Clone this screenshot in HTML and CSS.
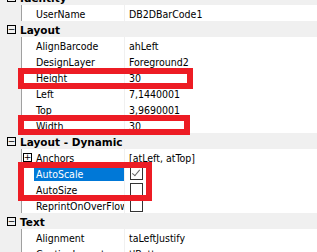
FILE: index.html
```html
<!DOCTYPE html>
<html lang="en">
<head>
    <meta charset="UTF-8">
    <title>Object Inspector</title>
    <link rel="stylesheet" href="styles.css">
</head>
<body>
    <div class="inspector">
        <div class="grid">
            <div class="row category"><span class="toggle">&minus;</span>Identity</div>
            <div class="row"><div class="gutter"></div><div class="name">UserName</div><div class="value">DB2DBarCode1</div></div>

            <div class="row category"><span class="toggle">&minus;</span>Layout</div>
            <div class="row"><div class="gutter"></div><div class="name">AlignBarcode</div><div class="value">ahLeft</div></div>
            <div class="row"><div class="gutter"></div><div class="name">DesignLayer</div><div class="value">Foreground2</div></div>
            <div class="row"><div class="gutter"></div><div class="name">Height</div><div class="value">30</div></div>
            <div class="row"><div class="gutter"></div><div class="name">Left</div><div class="value">7,1440001</div></div>
            <div class="row"><div class="gutter"></div><div class="name">Top</div><div class="value">3,9690001</div></div>
            <div class="row"><div class="gutter"></div><div class="name">Width</div><div class="value">30</div></div>

            <div class="row category"><span class="toggle">&minus;</span>Layout - Dynamic</div>
            <div class="row"><div class="gutter"></div><div class="name sub"><span class="toggle small">+</span>Anchors</div><div class="value">[atLeft, atTop]</div></div>
            <div class="row"><div class="gutter"></div><div class="name selected">AutoScale</div><div class="value"><span class="check checked"></span></div></div>
            <div class="row"><div class="gutter"></div><div class="name">AutoSize</div><div class="value"><span class="check"></span></div></div>
            <div class="row"><div class="gutter"></div><div class="name">ReprintOnOverFlow</div><div class="value"><span class="check"></span></div></div>

            <div class="row category"><span class="toggle">&minus;</span>Text</div>
            <div class="row"><div class="gutter"></div><div class="name">Alignment</div><div class="value">taLeftJustify</div></div>
            <div class="row"><div class="gutter"></div><div class="name">CaptionLayout</div><div class="value">tlBottom</div></div>
        </div>

        <!-- highlight boxes drawn over the grid -->
        <div class="mark mark-height"></div>
        <div class="mark mark-width"></div>
        <div class="mark mark-auto"></div>
    </div>
</body>
</html>
```

FILE: styles.css
```css
body {
    margin: 0;
    background-color: #ffffff;
    font-family: 'DejaVu Sans Condensed', 'DejaVu Sans', sans-serif;
    font-size: 10.5px;
    color: #000000;
    overflow: hidden;
}

.inspector {
    position: relative;
    width: 317px;
    height: 252px;
    overflow: hidden;
}

.grid {
    margin-top: -11px;
}

.row {
    display: flex;
    height: 16px;
    line-height: 16px;
    background-color: #ffffff;
}

.row > .name,
.row > .value {
    box-sizing: border-box;
    padding-top: 1px;
}

.category {
    background-color: #f0f0f0;
    font-weight: bold;
    font-family: 'DejaVu Sans', sans-serif;
    font-size: 10.5px;
    align-items: center;
    padding-top: 1px;
    box-sizing: border-box;
}

.toggle {
    display: inline-flex;
    justify-content: center;
    align-items: center;
    width: 7px;
    height: 7px;
    border: 1px solid #000000;
    margin: 0 4px 0 7px;
    font-size: 9px;
    line-height: 1;
    font-weight: normal;
    font-family: 'DejaVu Sans', sans-serif;
    background-color: #ffffff;
}

.category .toggle {
    background-color: transparent;
}

.toggle.small {
    margin: 0 4px 0 1px;
}

.gutter {
    width: 21px;
    background-color: #f0f0f0;
    border-right: 1px solid #a0a0a0;
    flex-shrink: 0;
}

.name {
    width: 103px;
    padding-left: 14px;
    padding-right: 2px;
    border-right: 1px solid #f0f0f0;
    white-space: nowrap;
    overflow: hidden;
    flex-shrink: 0;
}

.name.sub {
    padding-left: 0;
    display: flex;
    align-items: center;
}

.name.selected {
    background-color: #0078d7;
    color: #ffffff;
    margin-left: 12px;
    padding-left: 2px;
    width: 91px;
}

.value {
    padding-left: 4px;
    white-space: nowrap;
    display: flex;
    align-items: center;
}

.check {
    position: relative;
    width: 11px;
    height: 11px;
    border: 1px solid #333333;
    margin-left: 1px;
}

.check.checked::after {
    content: "";
    position: absolute;
    left: 3px;
    top: 0;
    width: 3px;
    height: 7px;
    border-right: 1px solid #666666;
    border-bottom: 1px solid #666666;
    transform: rotate(40deg);
}

.mark {
    position: absolute;
    border: 6px solid #ed1c24;
    box-sizing: border-box;
}

.mark-height {
    left: 18px;
    top: 68px;
    width: 175px;
    height: 21px;
}

.mark-width {
    left: 18px;
    top: 115px;
    width: 172px;
    height: 20px;
}

.mark-auto {
    left: 18px;
    top: 162px;
    width: 134px;
    height: 39px;
}
```
